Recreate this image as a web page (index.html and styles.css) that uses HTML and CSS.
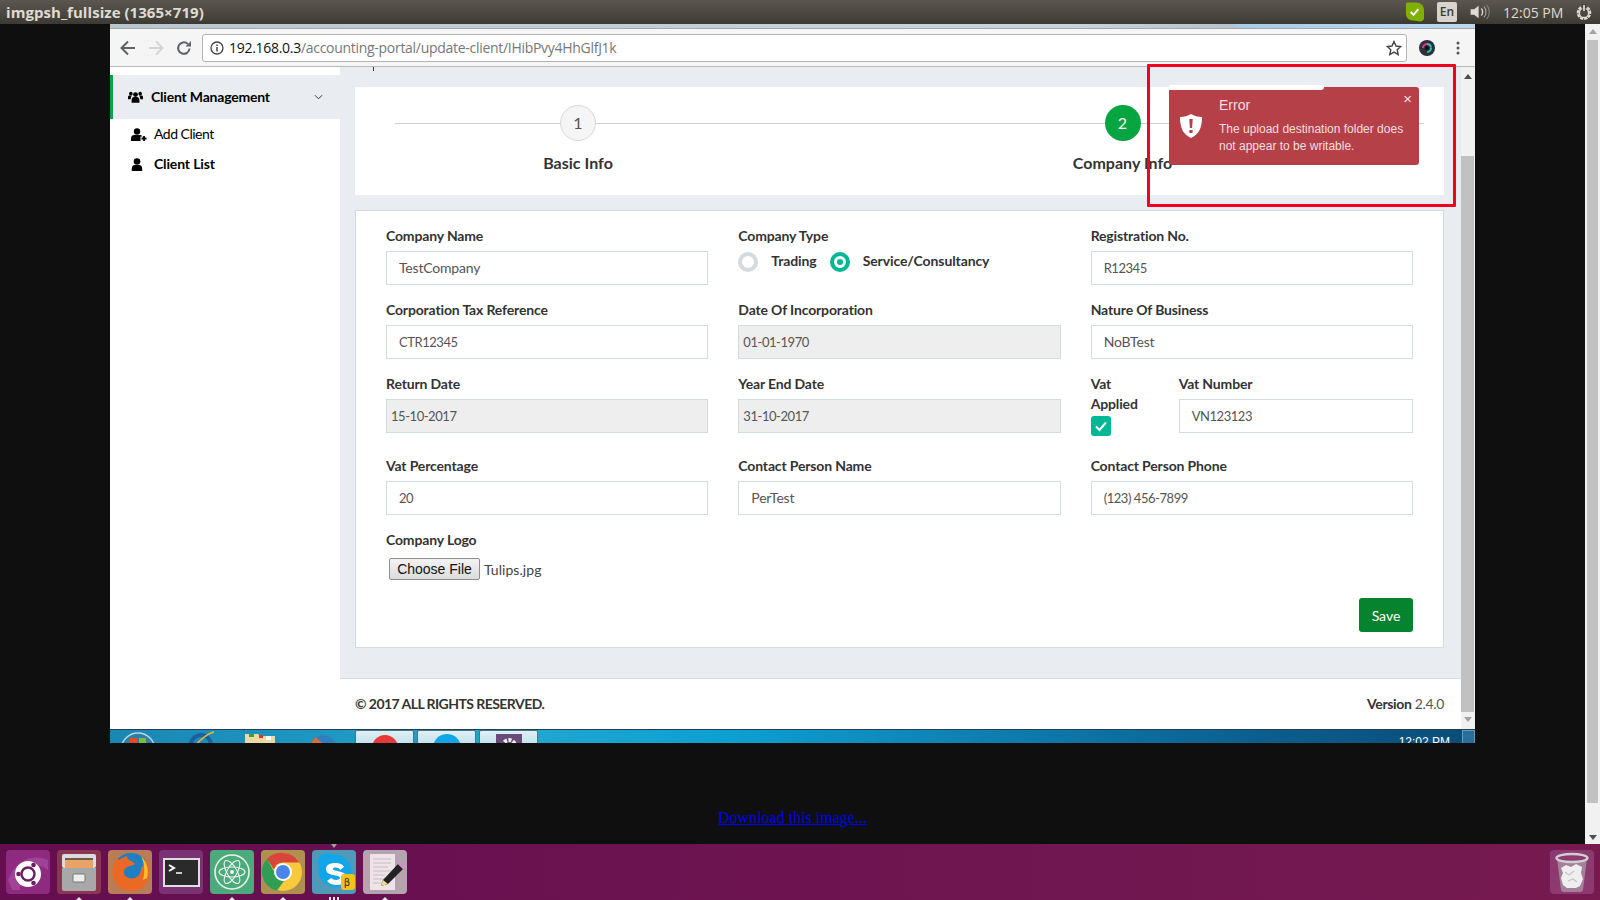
FILE: index.html
```html
<!DOCTYPE html>
<html lang="en">
<head>
<meta charset="utf-8">
<title>imgpsh_fullsize (1365×719)</title>
<link rel="stylesheet" href="styles.css">
</head>
<body>
<header class="topbar">
  <div class="win-title">imgpsh_fullsize (1365×719)</div>
  <div class="tray">
    <svg class="tray-skype" viewBox="0 0 22 22"><path d="M4 1h9c4 0 8 3 8 8v8c0 3-2 4-5 4-2 0-3-1-6-1-5 0-8-3-8-8V4c0-2 0-3 2-3z" fill="#7fb000"/><path d="M7 11l3 3 5-6" fill="none" stroke="#fff" stroke-width="2"/></svg>
    <span class="tray-lang">En</span>
    <svg class="tray-sound" viewBox="0 0 22 18"><path d="M1 6h4l5-4v14l-5-4H1z" fill="#dfdbd2"/><path d="M13 5c2 2 2 6 0 8" fill="none" stroke="#dfdbd2" stroke-width="1.5"/><path d="M16 3c3 3 3 9 0 12" fill="none" stroke="#a9a69f" stroke-width="1.3"/><path d="M19 1c4 4 4 12 0 16" fill="none" stroke="#85827b" stroke-width="1.2"/></svg>
    <span class="tray-time">12:05 PM</span>
    <svg class="tray-gear" viewBox="0 0 18 18"><path d="M5.800 3.600a7 7 0 1 0 6.400 0" fill="none" stroke="#dfdbd2" stroke-width="2.400" stroke-dasharray="3.600 1"/><circle cx="9" cy="10" r="5.200" fill="none" stroke="#dfdbd2" stroke-width="1.600"/><path d="M9 0v8" stroke="#3f3c36" stroke-width="4"/><path d="M9 1v7" stroke="#dfdbd2" stroke-width="2"/></svg>
  </div>
</header>

<div class="viewer">
  <main class="viewer-main">
    <div class="shot">
      <div class="tabstrip"><span class="tab-end"></span></div>
      <div class="toolbar">
        <svg class="nav-icon" viewBox="0 0 16 16"><path d="M15 8H2M8 1.500L1.500 8 8 14.500" fill="none" stroke="#5f6368" stroke-width="2"/></svg>
        <svg class="nav-icon" viewBox="0 0 16 16"><path d="M1 8h13M8 1.500L14.500 8 8 14.500" fill="none" stroke="#d2d4d6" stroke-width="2"/></svg>
        <svg class="nav-icon" viewBox="0 0 16 16"><path d="M13.500 8.500A5.700 5.700 0 1 1 11.800 4" fill="none" stroke="#5f6368" stroke-width="2"/><path d="M9.500 6.500H15V1z" fill="#5f6368"/></svg>
        <div class="urlbar">
          <svg class="info-icon" viewBox="0 0 14 14"><circle cx="7" cy="7" r="6" fill="none" stroke="#444" stroke-width="1.300"/><path d="M7 6v4.500M7 3.500v1.500" stroke="#444" stroke-width="1.500"/></svg>
          <span class="url"><span class="url-host">192.168.0.3</span>/accounting-portal/update-client/IHibPvy4HhGlfJ1k</span>
          <svg class="star-icon" viewBox="0 0 16 16"><path d="M8 1.500l2 4.500 4.800.5-3.600 3.200 1 4.800L8 12.100 3.800 14.500l1-4.800L1.200 6.500 6 6z" fill="none" stroke="#444" stroke-width="1.400"/></svg>
        </div>
        <svg class="ext-icon" viewBox="0 0 18 18"><circle cx="9" cy="9" r="8" fill="#2c3138"/><circle cx="9" cy="9" r="4" fill="none" stroke="#23c0c8" stroke-width="2" stroke-dasharray="6 12"/><path d="M5 9a4 4 0 0 1 4-4" fill="none" stroke="#e8308a" stroke-width="2"/><circle cx="9" cy="9" r="2" fill="#111"/></svg>
        <svg class="menu-icon" viewBox="0 0 4 14"><circle cx="2" cy="2" r="1.500"/><circle cx="2" cy="7" r="1.500"/><circle cx="2" cy="12" r="1.500"/></svg>
      </div>

      <div class="app">
        <aside class="sidebar">
          <div class="menu-head">
            <svg class="icon-users" viewBox="0 0 20 16"><circle cx="10" cy="4.800" r="3.200"/><path d="M4.800 15.500v-3.500c0-2.600 1.700-4 3-4h4.400c1.300 0 3 1.400 3 4v3.500z"/><circle cx="3.800" cy="3.500" r="2.400"/><circle cx="16.200" cy="3.500" r="2.400"/><path d="M0 11V8.300c0-1.500.8-2.300 2-2.300h3.300C4 7.500 3.700 9 3.600 11zM20 11V8.300c0-1.500-.8-2.300-2-2.300h-3.300c1.300 1.500 1.600 3 1.700 5z"/></svg>
            <span class="menu-title">Client Management</span>
            <svg class="chevron" viewBox="0 0 10 6"><path d="M1 1l4 4 4-4" fill="none" stroke="#222" stroke-width="1"/></svg>
          </div>
          <div class="menu-item">
            <svg class="icon-add" viewBox="0 0 16 13"><circle cx="6" cy="3.500" r="3.200"/><path d="M0 13v-2.500C0 8 1.500 7 3 7h6c1 0 2 .6 2.500 1.500H9.500V13z"/><path d="M10.500 10.500h5M13 8v5" stroke="#000" stroke-width="1.800"/></svg>
            <span class="menu-text">Add Client</span>
          </div>
          <div class="menu-item menu-item-strong">
            <svg class="icon-user" viewBox="0 0 12 13"><circle cx="6" cy="3.500" r="3.300"/><path d="M.8 13v-2.500C.8 8 2.300 7 3.800 7h4.400c1.500 0 3 1 3 3.500V13z"/></svg>
            <span class="menu-text">Client List</span>
          </div>
        </aside>

        <section class="content">
          <div class="content-scroll">
            <span class="cut-tick"></span>
            <div class="stepper">
              <div class="step step-first">
                <span class="step-num">1</span>
                <span class="step-name">Basic Info</span>
              </div>
              <div class="step">
                <span class="step-num step-num-active">2</span>
                <span class="step-name">Company Info</span>
              </div>
            </div>

            <form class="card">
              <div class="form-grid">
                <div class="field">
                  <label>Company Name</label>
                  <div class="input">TestCompany</div>
                </div>
                <div class="field">
                  <label>Company Type</label>
                  <div class="radios">
                    <span class="radio"></span><span class="radio-label">Trading</span>
                    <span class="radio radio-on"></span><span class="radio-label">Service/Consultancy</span>
                  </div>
                </div>
                <div class="field">
                  <label>Registration No.</label>
                  <div class="input input-num">R12345</div>
                </div>
                <div class="field">
                  <label>Corporation Tax Reference</label>
                  <div class="input input-num">CTR12345</div>
                </div>
                <div class="field">
                  <label>Date Of Incorporation</label>
                  <div class="input input-off input-num">01-01-1970</div>
                </div>
                <div class="field">
                  <label>Nature Of Business</label>
                  <div class="input">NoBTest</div>
                </div>
                <div class="field field-tall">
                  <label>Return Date</label>
                  <div class="input input-off input-num">15-10-2017</div>
                </div>
                <div class="field field-tall">
                  <label>Year End Date</label>
                  <div class="input input-off input-num">31-10-2017</div>
                </div>
                <div class="field field-tall vat">
                  <div class="vat-check">
                    <label>Vat Applied</label>
                    <span class="checkbox"><svg viewBox="0 0 20 20"><path d="M5 10.500l3.500 3.500 6.500-7.500" fill="none" stroke="#fff" stroke-width="2"/></svg></span>
                  </div>
                  <div class="vat-number">
                    <label>Vat Number</label>
                    <div class="input input-num">VN123123</div>
                  </div>
                </div>
                <div class="field">
                  <label>Vat Percentage</label>
                  <div class="input input-num">20</div>
                </div>
                <div class="field">
                  <label>Contact Person Name</label>
                  <div class="input">PerTest</div>
                </div>
                <div class="field">
                  <label>Contact Person Phone</label>
                  <div class="input input-num">(123) 456-7899</div>
                </div>
                <div class="field field-logo">
                  <label>Company Logo</label>
                  <div class="file-row"><button type="button" class="file-btn">Choose File</button><span class="file-name">Tulips.jpg</span></div>
                </div>
              </div>
              <div class="form-actions"><button type="button" class="save-btn">Save</button></div>
            </form>
          </div>
          <footer class="app-footer">
            <strong class="copyright">© 2017 ALL RIGHTS RESERVED.</strong>
            <span class="version"><strong>Version</strong> 2.4.0</span>
          </footer>
        </section>

        <div class="inner-scroll">
          <span class="arrow-up"></span>
          <span class="inner-thumb"></span>
          <span class="arrow-down"></span>
        </div>
      </div>

      <div class="win-taskbar">
        <svg class="win-orb" viewBox="0 0 36 36"><circle cx="18" cy="18" r="17" fill="#2c7fa5" stroke="#bcd6e2" stroke-width="1.500"/><path d="M10 6h7v8h-7z" fill="#e8492e"/><path d="M19 6h7v8h-7z" fill="#7fba30"/></svg>
        <svg class="win-ie" viewBox="0 0 28 28"><circle cx="13" cy="14" r="10" fill="none" stroke="#1b5f9e" stroke-width="4"/><path d="M2 22C8 12 18 3 26 1" fill="none" stroke="#f2b632" stroke-width="1.500"/></svg>
        <svg class="win-folder" viewBox="0 0 32 28"><path d="M1 4h13l2 2h15v22H1z" fill="#edd9a3"/><path d="M5 4h5v3H5z" fill="#3aa245"/><path d="M15 5h4v3h-4z" fill="#d8392f"/><path d="M22 6h5v4h-5z" fill="#fff"/></svg>
        <svg class="win-ff" viewBox="0 0 28 28"><circle cx="14" cy="14" r="13" fill="#2f7fc4"/><path d="M2 14C2 8 4 5 8 3c-1 4 6 4 6 8-3 0-4 3-1 5 4 2 10 1 14-3v6H2z" fill="#ea6a25"/></svg>
        <div class="win-task win-task-first"><svg viewBox="0 0 30 30"><circle cx="15" cy="15" r="13" fill="#e63a3a"/></svg></div>
        <div class="win-task"><svg viewBox="0 0 30 30"><circle cx="15" cy="15" r="14" fill="#12a5e8"/><circle cx="15" cy="14" r="4" fill="#fff"/></svg></div>
        <div class="win-task"><svg viewBox="0 0 30 30"><path d="M2 1h26v30H2z" fill="#6a4a78"/><circle cx="15" cy="13" r="6" fill="none" stroke="#eee" stroke-width="4" stroke-dasharray="3 1.500"/></svg></div>
        <span class="win-clock">12:02 PM</span>
        <span class="win-show"></span>
      </div>

      <div class="annotation"></div>
      <div class="toast">
        <svg class="toast-icon" viewBox="0 0 22 24"><path d="M11 0c3 2 7 3 11 3 0 9-2 17-11 21C2 20 0 12 0 3c4 0 8-1 11-3z" fill="#fff"/><path d="M9.300 5h3.400l-.6 9h-2.200zM9.400 16h3.200v3H9.400z" fill="#b54048"/></svg>
        <div class="toast-body">
          <div class="toast-title">Error</div>
          <div class="toast-text">The upload destination folder does not appear to be writable.</div>
        </div>
        <span class="toast-close">×</span>
      </div>
    </div>
    <a class="download" href="#">Download this image...</a>
  </main>
  <div class="page-scroll">
    <span class="arrow-up"></span>
    <span class="page-thumb"></span>
    <span class="arrow-down arrow-dark"></span>
  </div>
</div>

<nav class="launcher">
  <div class="tile tile-ubuntu">
    <svg viewBox="0 0 44 44"><path d="M2 30C10 8 30 4 42 10v10C30 10 14 18 14 40H6z" fill="#b45ba8" opacity=".5"/><circle cx="22" cy="24" r="13" fill="#fff"/><circle cx="22" cy="24" r="6.500" fill="none" stroke="#6b1f63" stroke-width="2.400"/><circle cx="27.500" cy="15" r="2.300" fill="#6b1f63"/><circle cx="27.500" cy="33" r="2.300" fill="#6b1f63"/><circle cx="12.500" cy="24" r="2.300" fill="#6b1f63"/></svg>
  </div>
  <div class="tile tile-files run">
    <svg viewBox="0 0 44 44"><rect x="5" y="4" width="34" height="14" rx="2" fill="#dcdcdc"/><rect x="8" y="10" width="28" height="9" fill="#e9a367"/><rect x="8" y="8" width="28" height="2" fill="#6a5a50"/><path d="M5 18h34v21a2 2 0 0 1-2 2H7a2 2 0 0 1-2-2z" fill="#a8a8a8"/><rect x="16" y="24" width="12" height="8" rx="1" fill="#eee" stroke="#777"/></svg>
  </div>
  <div class="tile tile-firefox run">
    <svg viewBox="0 0 44 44"><circle cx="23" cy="21" r="18" fill="#1f7fc2"/><path d="M8 8c-4 8-5 16-1 24 5 9 18 12 27 6 6-4 9-12 7-22-1-3-2-6-4-8 0 6-2 8-4 10 0 7-5 12-12 10-5-1-7-7-3-10 3-3 8-2 9-4-3-4-8-3-8-8-3 1-6 2-8 4-1-1-2-2-3-2z" fill="#ea6a25"/><path d="M33 6c6 6 8 14 6 22l-4 2c2-7 2-16-2-24z" fill="#f5c12a"/></svg>
  </div>
  <div class="tile tile-terminal">
    <svg viewBox="0 0 44 44"><rect x="4" y="8" width="37" height="29" fill="#dedede"/><rect x="6" y="10" width="33" height="25" fill="#2a2a2a"/><path d="M10 15l5 3-5 3" fill="none" stroke="#fff" stroke-width="2"/><path d="M17 23h6" stroke="#fff" stroke-width="1.500"/></svg>
  </div>
  <div class="tile tile-atom run">
    <svg viewBox="0 0 44 44"><circle cx="22" cy="22" r="17" fill="none" stroke="#eaf5ee" stroke-width="1.500"/><g fill="none" stroke="#eaf5ee" stroke-width="1.100"><ellipse cx="22" cy="22" rx="5" ry="13" transform="rotate(30 22 22)"/><ellipse cx="22" cy="22" rx="5" ry="13" transform="rotate(-30 22 22)"/><ellipse cx="22" cy="22" rx="5" ry="13" transform="rotate(90 22 22)"/></g><circle cx="22" cy="22" r="2" fill="#eaf5ee"/></svg>
  </div>
  <div class="tile tile-chrome run">
    <svg viewBox="0 0 44 44"><circle cx="22" cy="22" r="19" fill="#f8c93a"/><path d="M22 3a19 19 0 0 1 16.500 9.500H22a9.500 9.500 0 0 0-9 7L6 9A19 19 0 0 1 22 3z" fill="#d9453a"/><path d="M6 9l8 14a9.500 9.500 0 0 0 9 8l-7 9.500A19 19 0 0 1 6 9z" fill="#2f9e52"/><circle cx="22" cy="22" r="9" fill="#fff"/><circle cx="22" cy="22" r="7" fill="#4a86e8"/></svg>
  </div>
  <div class="tile tile-skype run-three arrow-top">
    <svg viewBox="0 0 44 44"><path d="M12 4a10 10 0 0 1 8 1c11-2 21 8 19 19 3 8-4 16-12 13C15 39 4 28 7 17 4 11 6 6 12 4z" fill="#12a5e8"/><path d="M32 17c-1-3-5-4-9-4-5 0-9 2-9 6 0 8 14 5 14 9 0 2-6 3-9 0l-4 3c3 3 6 4 10 4 6 0 10-3 10-7 0-8-14-6-14-9 0-2 6-2 7 1z" fill="#fff"/><rect class="beta-bg" x="29" y="24" width="14" height="16" rx="3" fill="#f0c21a"/></svg>
    <span class="beta">β</span>
  </div>
  <div class="tile tile-text run">
    <svg viewBox="0 0 44 44"><rect x="7" y="4" width="25" height="36" fill="#eee4e8"/><path d="M10 9h18M10 13h18M10 17h15M10 21h18M10 25h12M10 29h14M10 33h10" stroke="#c9bcc4" stroke-width="1"/><path d="M20 30l15-16 5 5-15 15-7 2z" fill="#222"/><path d="M35 14l2-3 5 5-2 3z" fill="#d98ccf"/><path d="M18 36l2-6 5 4z" fill="#f0dc8a"/></svg>
  </div>
  <div class="tile tile-trash">
    <svg viewBox="0 0 44 44"><path d="M7 8l4 32a3 3 0 0 0 3 2h16a3 3 0 0 0 3-2l4-32z" fill="#a5809a"/><path d="M11 18l5-3 5 2 5-3 6 3-1 6 2 6-3 7-4 2h-9l-4-3-2-7 2-5z" fill="#efefef"/><path d="M15 22l4 3 5-4M18 31l5-2 4 3" fill="none" stroke="#c4c4c4" stroke-width="1.200"/><ellipse cx="22" cy="8" rx="15.500" ry="4" fill="#8d3a70" stroke="#cfcfcf" stroke-width="2.400"/></svg>
  </div>
</nav>
</body>
</html>
```

FILE: styles.css
```css
* { box-sizing: border-box; }
html, body { height: 100%; }
body {
  margin: 0;
  height: 900px;
  overflow: hidden;
  display: flex;
  flex-direction: column;
  background: #0f0f0f;
  font-family: "Lato", "Liberation Sans", sans-serif;
}

/* Desktop top bar */
.topbar {
  height: 24px;
  flex: none;
  display: flex;
  align-items: center;
  justify-content: space-between;
  padding-left: 6px;
  background: linear-gradient(#5b5750, #3d3a34);
  color: #dfdbd2;
}
.win-title {
  font: 700 15px "Open Sans", sans-serif;
  letter-spacing: .05px;
}
.tray { display: flex; align-items: center; }
.tray-skype { width: 21px; height: 22px; margin-right: 12px; }
.tray-lang {
  width: 20px;
  height: 20px;
  margin-right: 12px;
  background: #d8d4cc;
  border-radius: 2px;
  color: #3c3a35;
  font: 600 12px/20px "Open Sans", sans-serif;
  text-align: center;
}
.tray-sound { width: 21px; height: 16px; margin-right: 13px; }
.tray-time { width: 60px; margin-right: 13px; font: 14px "Open Sans", sans-serif; white-space: nowrap; }
.tray-gear { width: 16px; height: 18px; margin-right: 8px; }

/* Image viewer */
.viewer { flex: 1; min-height: 0; display: flex; }
.viewer-main {
  flex: 1;
  display: flex;
  flex-direction: column;
  align-items: center;
  min-width: 0;
}
.page-scroll {
  width: 15px;
  flex: none;
  display: flex;
  flex-direction: column;
  align-items: center;
  background: #f1f1f1;
  padding: 5px 0 4px;
}
.page-thumb { width: 11px; height: 763px; margin: 6px 0 auto; background: #c1c1c1; }
.arrow-up, .arrow-down { width: 0; height: 0; border: 4px solid transparent; flex: none; }
.arrow-up { border-top: 0; border-bottom: 5px solid #a3a3a3; }
.arrow-down { border-bottom: 0; border-top: 5px solid #a3a3a3; }
.arrow-dark { border-top-color: #505050; }
.shot {
  position: relative;
  width: 1365px;
  height: 719px;
  flex: none;
  display: flex;
  flex-direction: column;
  overflow: hidden;
  background: #fff;
  color: #333;
}
.download {
  margin-top: 66px;
  font: 16px "Liberation Serif", serif;
  color: #0000ee;
  text-decoration: underline;
}

/* Browser chrome inside the picture */
.tabstrip {
  height: 5px;
  flex: none;
  background: linear-gradient(90deg, #b9c6d2, #c9d3dc 70%, #b5c2cf 82%, #a5cdec 83%, #bcd9ef);
  border-bottom: 1px solid #a8a8a8;
}
.toolbar {
  height: 38px;
  flex: none;
  display: flex;
  align-items: center;
  padding-left: 10px;
  background: #f5f5f5;
  border-bottom: 1px solid #b8b8b8;
}
.nav-icon { width: 16px; height: 16px; margin-right: 12px; flex: none; }
.urlbar {
  width: 1205px;
  height: 28px;
  margin-left: -2px;
  display: flex;
  align-items: center;
  padding: 0 4px 0 7px;
  background: #fff;
  border: 1px solid #b4b4b4;
  border-radius: 3px;
}
.info-icon { width: 14px; height: 14px; margin-right: 5px; }
.url {
  flex: 1;
  font: 14px "Open Sans", sans-serif;
  letter-spacing: -0.29px;
  color: #777;
  white-space: nowrap;
}
.url-host { color: #111; }
.star-icon { width: 16px; height: 16px; }
.ext-icon { width: 18px; height: 18px; margin-left: 11px; }
.menu-icon { width: 4px; height: 14px; margin-left: 20px; fill: #555; }

/* Application */
.app { flex: 1; min-height: 0; display: flex; }
.sidebar { width: 230px; flex: none; background: #fff; padding-top: 8px; color: #000; font-size: 14px; }
.menu-head {
  height: 44px;
  display: flex;
  align-items: center;
  padding-left: 15px;
  background: #e9edf1;
  border-left: 3px solid #05a541;
  font-weight: 700;
}
.icon-users { width: 15px; height: 14px; margin-right: 8px; fill: #000; flex: none; }
.menu-title { flex: 1; padding-bottom: 2px; white-space: nowrap; letter-spacing: -.2px; }
.chevron { width: 9px; height: 6px; margin-right: 17px; }
.menu-item {
  height: 30px;
  display: flex;
  align-items: center;
  padding-left: 21px;
}
.menu-text { padding-bottom: 2px; letter-spacing: -.5px; }
.menu-item-strong .menu-text { font-weight: 700; letter-spacing: -.15px; }
.menu-item svg { margin-right: 7px; flex: none; fill: #000; }
.icon-add { width: 16px; height: 13px; }
.menu-item .icon-user { width: 12px; height: 13px; margin-right: 11px; }

.content { flex: 1; min-width: 0; display: flex; flex-direction: column; background: #e9edf1; }
.content-scroll { flex: 1; min-height: 0; padding: 0 17px 0 15px; }
.cut-tick { display: block; width: 1px; height: 4px; margin: 0 0 16px 18px; background: #333; }
.stepper {
  position: relative;
  height: 108px;
  display: flex;
  background: #fff;
  margin-bottom: 15px;
}
.stepper::before {
  content: "";
  position: absolute;
  left: 40px;
  right: 20px;
  top: 36px;
  height: 1px;
  background: #cfcfcf;
}
.step { flex: 1; position: relative; display: flex; flex-direction: column; align-items: center; padding-top: 18px; }
.step-first { flex: 0 0 446px; }
.step-num {
  width: 36px;
  height: 36px;
  border-radius: 50%;
  border: 1px solid #d8d8d8;
  background: #f5f5f5;
  color: #555;
  font-size: 16px;
  line-height: 34px;
  text-align: center;
}
.step-num-active { border: 0; line-height: 36px; background: #05a541; color: #fff; }
.step-name { margin-top: 12px; font-size: 16px; font-weight: 700; letter-spacing: .03px; color: #333; white-space: nowrap; }

.card { height: 438px; padding: 15px 30px; background: #fff; border: 1px solid #d3dae0; }
.form-grid { display: grid; grid-template-columns: repeat(3, 1fr); column-gap: 30px; }
.field { height: 74px; }
.field-tall { height: 82px; }
.field-logo { height: 68px; }
label {
  display: block;
  height: 20px;
  margin-bottom: 5px;
  font-size: 14px;
  line-height: 20px;
  font-weight: 700;
  color: #333;
  letter-spacing: -.15px;
  white-space: nowrap;
}
.input {
  height: 34px;
  padding-left: 12px;
  border: 1px solid #d3dae0;
  background: #fff;
  color: #555;
  font-size: 14px;
  line-height: 31px;
  letter-spacing: -.2px;
}
.input-num { font-size: 13px; line-height: 33px; letter-spacing: -.45px; }
.input-off { padding-left: 4px; background: #eee; }
.radios { display: flex; align-items: center; height: 26px; font-size: 14px; font-weight: 700; color: #333; letter-spacing: -.1px; margin-top: -2px; }
.radio { width: 20px; height: 20px; border-radius: 50%; border: 4px solid #d5dade; background: #fff; flex: none; margin-right: 13px; }
.radio-on { position: relative; border-color: #00b894; }
.radio-on::after { content: ""; position: absolute; inset: 3px; border-radius: 50%; background: #00b894; }
.radio-label { margin-right: 13px; padding-bottom: 4px; white-space: nowrap; }
.vat { display: flex; gap: 20px; }
.vat-check { width: 68px; flex: none; }
.vat-check label { height: 40px; margin-bottom: 2px; white-space: normal; }
.vat-number { flex: 1; }
.checkbox { display: block; width: 20px; height: 20px; background: #00b894; border-radius: 3px; }
.checkbox svg { display: block; width: 20px; height: 20px; }
.file-row { display: flex; align-items: center; margin-top: 8px; padding-left: 3px; }
.file-btn {
  width: 91px;
  height: 22px;
  padding: 0;
  margin-right: 4px;
  font: 14px "Liberation Sans", sans-serif;
  color: #111;
  background: linear-gradient(#f3f3f3, #dcdcdc);
  border: 1px solid #8e8e8e;
  border-radius: 2px;
}
.file-name { font-size: 14px; color: #444; letter-spacing: .05px; }
.form-actions { display: flex; justify-content: flex-end; }
.save-btn {
  width: 54px;
  height: 34px;
  padding: 0;
  background: #06832f;
  border: 0;
  border-radius: 3px;
  color: #fff;
  font: 14px "Lato", sans-serif;
}
.app-footer {
  height: 51px;
  flex: none;
  display: flex;
  align-items: center;
  justify-content: space-between;
  padding: 0 17px 2px 15px;
  background: #fff;
  border-top: 1px solid #d3dae0;
  color: #333;
  font-size: 14px;
}
.copyright { letter-spacing: -.55px; }
.version { color: #555; letter-spacing: -.35px; }
.version strong { color: #333; }

.inner-scroll {
  width: 14px;
  flex: none;
  display: flex;
  flex-direction: column;
  align-items: center;
  background: #f1f1f1;
  padding-top: 7px;
}
.inner-scroll .arrow-up { border-bottom-color: #505050; }
.inner-thumb { width: 13px; height: 556px; margin: 77px 1px 5px 0; background: #c1c1c1; flex: none; }

/* Windows taskbar peeking in at the bottom of the picture */
.win-taskbar {
  height: 14px;
  flex: none;
  display: flex;
  align-items: flex-start;
  overflow: hidden;
  background: linear-gradient(90deg, #1a86b4, #22a6d0 30%, #0ca0d2 45%, #0f85b8 60%, #0b5d8e 85%, #094d78);
  border-top: 1px solid #24404f;
  padding-left: 10px;
}
.win-taskbar svg { flex: none; }
.win-orb { width: 36px; height: 36px; margin-top: 2px; }
.win-ie { width: 28px; height: 28px; margin: 1px 0 0 32px; }
.win-folder { width: 32px; height: 28px; margin: 0 0 0 28px; }
.win-ff { width: 28px; height: 28px; margin: 4px 0 0 33px; }
.win-task {
  width: 59px;
  height: 40px;
  margin: 0 0 0 3px;
  padding-top: 2px;
  display: flex;
  justify-content: center;
  background: linear-gradient(#dff0f6, #8fc6dc);
  border: 1px solid #4c7386;
  border-radius: 2px;
}
.win-task svg { width: 30px; height: 30px; }
.win-task-first { margin-left: 18px; }
.win-clock { margin: 5px 0 0 auto; color: #fff; font: 12px "Liberation Sans", sans-serif; white-space: nowrap; }
.win-show { width: 13px; height: 14px; margin-left: 12px; background: #2a6f9c; border: 1px solid #6a9ab8; }

/* Overlays on the picture */
.annotation {
  position: absolute;
  left: 1037px;
  top: 40px;
  width: 309px;
  height: 143px;
  border: 3px solid #f4001e;
  border-radius: 1px;
}
.toast {
  position: absolute;
  left: 1059px;
  top: 63px;
  width: 250px;
  height: 78px;
  display: flex;
  background: #b54048;
  border-radius: 3px;
  font-family: "Liberation Sans", sans-serif;
  color: #f6dfe0;
}
.toast::before {
  content: "";
  position: absolute;
  left: 0;
  top: -2px;
  width: 155px;
  height: 5px;
  background: #fff;
  border-radius: 0 0 3px 0;
}
.toast-icon { width: 22px; height: 24px; margin: 27px 0 0 11px; flex: none; }
.toast-body { margin-left: 17px; padding-top: 9px; }
.toast-title { font-size: 14px; line-height: 18px; margin-bottom: 7px; }
.toast-text { width: 190px; font-size: 12px; line-height: 17px; }
.toast-close { position: absolute; right: 7px; top: 3px; font-size: 15px; line-height: 18px; color: #f6dfe0; }

/* Launcher */
.launcher {
  position: relative;
  height: 56px;
  flex: none;
  display: flex;
  gap: 7px;
  padding: 6px 6px 0;
  background: linear-gradient(90deg, #640e50, #761a50);
}
.tile { position: relative; width: 44px; height: 44px; border-radius: 4px; flex: none; }
.tile svg { display: block; width: 44px; height: 44px; }
.tile-ubuntu { background: #8e2a80; }
.tile-files { background: #8a3650; }
.tile-firefox { background: #b97c58; }
.tile-terminal { background: #7a3275; }
.tile-atom { background: #4dab7b; }
.tile-chrome { background: #ae9150; }
.tile-skype { background: #4f9ab8; }
.tile-text { background: #b5a4b0; }
.tile-trash { margin-left: auto; background: #8d3a70; }
.run::after, .run-three::after {
  content: "";
  position: absolute;
  left: 19px;
  bottom: -6px;
  border: 3px solid transparent;
  border-top: 0;
  border-bottom: 3px solid #e6e6e6;
}
.run-three::after { left: 17px; width: 10px; height: 3px; bottom: -6px; border: 0; background: repeating-linear-gradient(90deg, #e6e6e6 0 2px, transparent 2px 4px); }
.arrow-top::before {
  content: "";
  position: absolute;
  left: 19px;
  top: -6px;
  border: 3px solid transparent;
  border-bottom: 0;
  border-top: 4px solid #a99aa5;
}
.beta { position: absolute; right: 3px; bottom: 6px; width: 12px; text-align: center; font: 10px "DejaVu Sans", sans-serif; color: #333; }
```
